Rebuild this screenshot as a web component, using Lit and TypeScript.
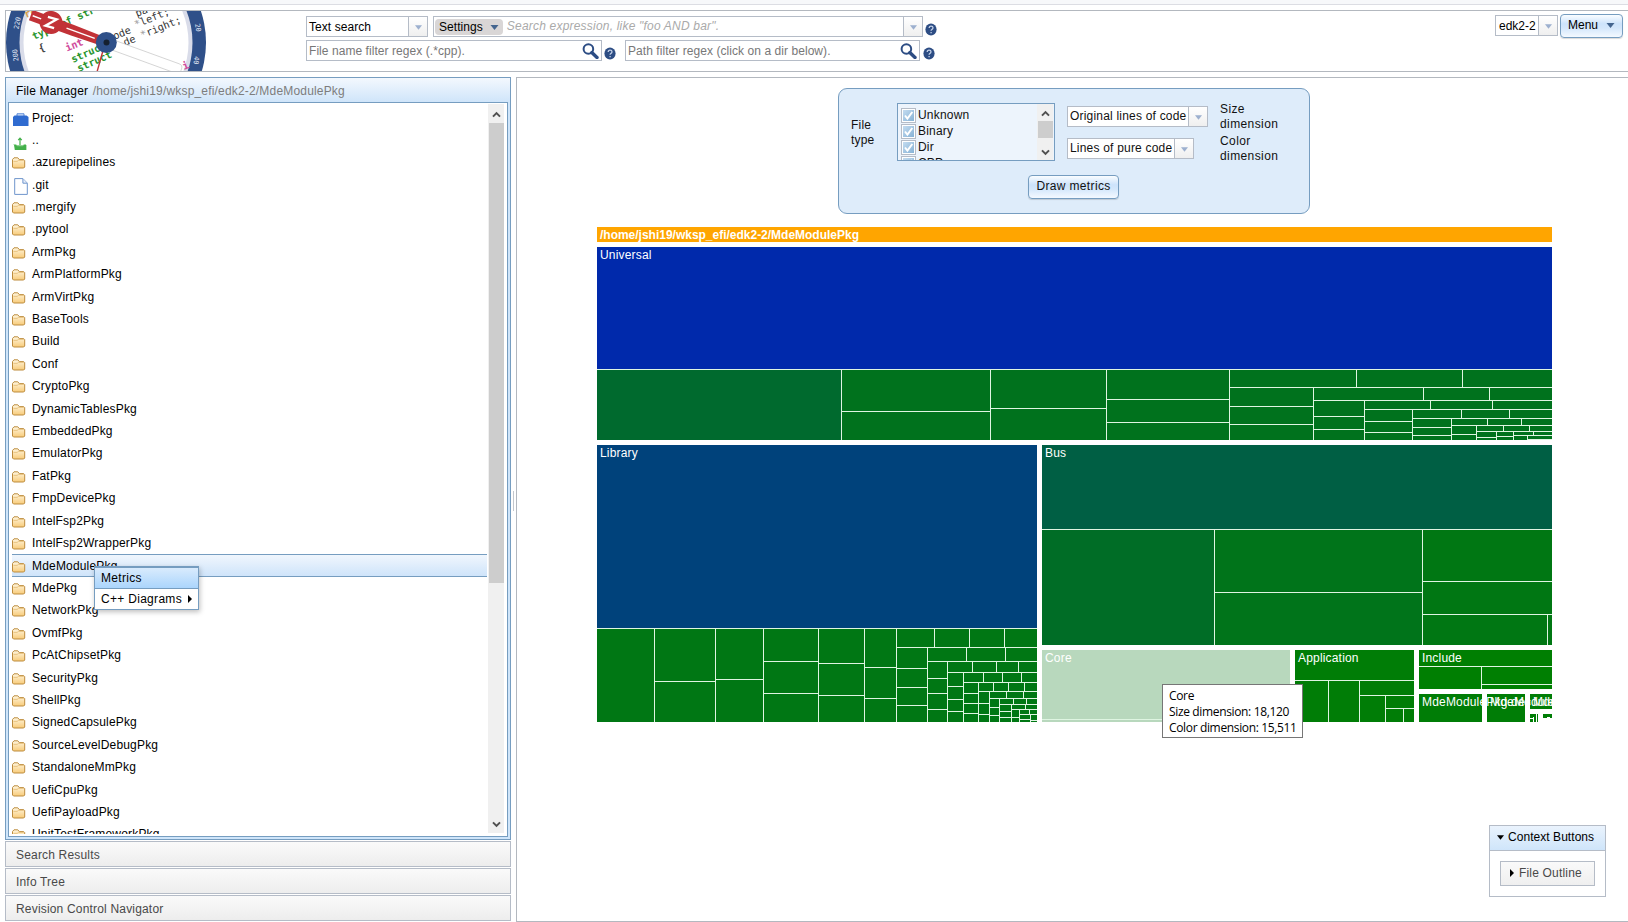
import { LitElement, html, svg, css } from "lit";
import { customElement } from "lit/decorators.js";

const FOLDERS = [
  ".azurepipelines", ".git", ".mergify", ".pytool", "ArmPkg", "ArmPlatformPkg", "ArmVirtPkg",
  "BaseTools", "Build", "Conf", "CryptoPkg", "DynamicTablesPkg", "EmbeddedPkg", "EmulatorPkg",
  "FatPkg", "FmpDevicePkg", "IntelFsp2Pkg", "IntelFsp2WrapperPkg", "MdeModulePkg", "MdePkg",
  "NetworkPkg", "OvmfPkg", "PcAtChipsetPkg", "SecurityPkg", "ShellPkg", "SignedCapsulePkg",
  "SourceLevelDebugPkg", "StandaloneMmPkg", "UefiCpuPkg", "UefiPayloadPkg", "UnitTestFrameworkPkg",
];

// Treemap areas: x, y, right, bottom, fill
const AREAS: [number, number, number, number, string][] = [
  [597, 227, 1552, 242, "#ffa500"],
  [597, 247, 1552, 369, "#0029ab"],
  [597, 369, 841, 440, "#006a2e"],
  [841, 369, 1552, 440, "#00721d"],
  [597, 445, 1037, 628, "#00427b"],
  [597, 628, 1037, 722, "#007714"],
  [1042, 445, 1552, 529, "#005f44"],
  [1042, 529, 1214, 645, "#006d26"],
  [1214, 529, 1422, 645, "#00741a"],
  [1422, 529, 1552, 645, "#007713"],
  [1042, 650, 1290, 722, "#b8d8bd"],
  [1295, 650, 1414, 722, "#007d06"],
  [1419, 650, 1552, 689, "#007f02"],
  [1419, 694, 1482, 722, "#007d06"],
  [1487, 694, 1525, 722, "#007d06"],
  [1530, 694, 1552, 709, "#007d06"],
  [1530, 714, 1538, 722, "#007d06"],
  [1543, 714, 1552, 718, "#007d06"],
];

// Horizontal separators: y, from, to
const H: [number, number, number][] = [
  [369, 597, 1552], [411, 841, 990], [408, 990, 1106], [399, 1106, 1229], [422, 1106, 1229],
  [387, 1229, 1552], [406, 1229, 1313], [424, 1229, 1313], [400, 1313, 1552], [416, 1313, 1364],
  [429, 1313, 1364], [409, 1364, 1552], [421, 1364, 1412], [432, 1364, 1412], [418, 1412, 1552],
  [427, 1412, 1451], [435, 1412, 1451], [425, 1451, 1552], [434, 1451, 1476], [431, 1476, 1552],
  [437, 1476, 1496], [436, 1496, 1513], [435, 1513, 1552], [439, 1527, 1552],
  [628, 597, 1037], [681, 654, 715], [679, 715, 763], [661, 763, 818], [693, 763, 818],
  [663, 818, 864], [695, 818, 864], [667, 864, 896], [698, 864, 896], [647, 896, 1037],
  [668, 896, 927], [687, 896, 927], [705, 896, 927], [661, 927, 1037], [678, 927, 947],
  [693, 927, 947], [709, 927, 947], [672, 947, 1037], [686, 947, 963], [699, 947, 963],
  [711, 947, 963], [682, 963, 1037], [693, 963, 978], [703, 963, 978], [713, 963, 978],
  [691, 978, 1037], [703, 978, 989], [714, 978, 989], [698, 989, 1037], [707, 989, 999],
  [715, 989, 999], [704, 999, 1037], [711, 999, 1011], [717, 999, 1011], [709, 1011, 1037],
  [717, 1011, 1019], [714, 1019, 1037], [719, 1019, 1030], [720, 1030, 1037],
  [529, 1042, 1552], [592, 1214, 1422], [581, 1422, 1552], [614, 1422, 1552],
  [719, 1042, 1290], [680, 1295, 1414], [695, 1359, 1414], [708, 1385, 1414],
  [666, 1419, 1552], [684, 1481, 1552],
];

// Vertical separators: x, from, to
const V: [number, number, number][] = [
  [841, 369, 440], [990, 369, 440], [1106, 369, 440], [1229, 369, 440], [1356, 369, 387],
  [1462, 369, 387], [1313, 387, 440], [1423, 387, 400], [1489, 387, 400], [1364, 400, 440],
  [1430, 400, 409], [1492, 400, 409], [1412, 409, 440], [1461, 409, 418], [1509, 409, 418],
  [1451, 418, 440], [1487, 418, 425], [1521, 418, 425], [1476, 425, 440], [1503, 425, 431],
  [1529, 425, 431], [1496, 431, 440], [1513, 431, 440], [1533, 431, 435], [1527, 435, 440],
  [654, 628, 722], [715, 628, 722], [763, 628, 722], [818, 628, 722], [864, 628, 722],
  [896, 628, 722], [934, 628, 647], [969, 628, 647], [1004, 628, 647], [927, 647, 722],
  [966, 647, 661], [1005, 647, 661], [947, 661, 722], [972, 661, 672], [996, 661, 672],
  [1018, 661, 672], [963, 672, 722], [983, 672, 682], [1002, 672, 682], [1021, 672, 682],
  [978, 682, 722], [993, 682, 691], [1008, 682, 691], [1024, 682, 691], [989, 691, 722],
  [1006, 691, 698], [1023, 691, 698], [999, 698, 722], [1013, 698, 704], [1026, 698, 704],
  [1011, 704, 722], [1025, 704, 709], [1019, 709, 722], [1029, 709, 714], [1030, 714, 722],
  [1214, 529, 645], [1422, 529, 645], [1547, 614, 645],
  [1328, 680, 722], [1359, 680, 722], [1385, 695, 722], [1403, 708, 722], [1481, 666, 689],
];

const LABELS: [number, number, string][] = [
  [600, 259, "Universal"], [600, 457, "Library"], [1045, 457, "Bus"], [1045, 662, "Core"],
  [1298, 662, "Application"], [1422, 662, "Include"], [1422, 706, "MdeModulePkg.dec"],
  [1490, 706, "MdeModulePkg.uni"], [1533, 706, "MdeModulePkg.dsc"],
];

const folderIcon = html`<svg class="ic" width="14" height="12" viewBox="0 0 14 12">
  <defs><linearGradient id="f" x1="0" y1="0" x2="0" y2="1"><stop offset="0" stop-color="#fff6df"/><stop offset="1" stop-color="#f8cb79"/></linearGradient></defs>
  <path d="M.5 10V2.5L2 .8h3.8L7.3 2.6h4.4l1 1V10l-1 1H1.5z" fill="url(#f)" stroke="#bd8c3e"/>
  <path d="M1.5 4.4h3.6l1.4-1h5.4" fill="none" stroke="#e3bb74" stroke-width=".8"/></svg>`;
const fileIcon = html`<svg class="ic file" width="14" height="17" viewBox="0 0 14 17">
  <path d="M.7.6h8.2l4.4 4.5v11.3H.7z" fill="#fff" stroke="#6f95cc"/><path d="M8.9.8v4.4h4.2" fill="#e8effa" stroke="#6f95cc"/></svg>`;
const projectIcon = html`<svg class="ic project" width="16" height="13" viewBox="0 0 16 13">
  <path d="M4 3V.8h7V3" fill="#dce9fb" stroke="#5585d6"/><path d="M0 4l1.5-1.6h12L15.5 4v9H0z" fill="#2f6bd0"/></svg>`;
const upIcon = html`<svg class="ic up" width="14" height="13" viewBox="0 0 14 13">
  <path d="M1 8h12.4v5H1.8z" fill="#43b04a"/><path d="M.5 7.5h2.6l1 1.2h5.8l1-1.2H13" fill="none" stroke="#a4dba6"/>
  <path d="M7 8V2M5.2 3.2L7 1.2l1.8 2" fill="none" stroke="#43b04a" stroke-width="1.2"/></svg>`;
const tri = (c: string, w = 8) => html`<svg width=${w} height="5" viewBox="0 0 8 5"><path d="M0 0h8L4 5z" fill=${c}/></svg>`;
const help = html`<svg class="help" width="12" height="13" viewBox="0 0 12 13"><ellipse cx="6" cy="6.5" rx="5.6" ry="6" fill="#2d4d84"/>
  <path d="M4.2 5q0-1.9 1.9-1.9T8 4.8q0 1-1 1.5t-.9 1.5M6.1 8.9v1.3" fill="none" stroke="#c3d0e8" stroke-width="1.3"/></svg>`;
const lens = html`<svg class="lens" width="17" height="16" viewBox="0 0 17 16"><circle cx="6.4" cy="6" r="4.8" fill="none" stroke="#2d4d84" stroke-width="2"/>
  <path d="M9.8 9.6l5.2 5" stroke="#2d4d84" stroke-width="3.4" stroke-linecap="round"/></svg>`;
const chev = (up: boolean) => html`<svg width="9" height="7" viewBox="0 0 9 7"><path d=${up ? "M1 5.6l3.5-3.5L8 5.6" : "M1 1.4l3.5 3.5L8 1.4"} fill="none" stroke="#505050" stroke-width="2"/></svg>`;

@customElement("app-root")
export class AppRoot extends LitElement {
  static styles = css`
    :host { display: block; width: 1628px; height: 922px; overflow: hidden; background: #fff; position: relative;
      font: 12px/16px "Liberation Sans", Arial, sans-serif; color: #000; letter-spacing: .18px; }
    * { box-sizing: border-box; }
    svg { display: block; flex: none; }
    .strip { height: 5px; background: #f7f8fa; border-bottom: 1px solid #dcdde3; }
    .top { margin: 5px 0 0 5px; height: 62px; border: 1px solid #b3b8bf; border-right: 0; display: flex; align-items: flex-start; }
    .logo { width: 201px; height: 60px; letter-spacing: 0; }
    .search { margin: 5px 0 0 99px; display: grid; gap: 3px; letter-spacing: .06px; }
    .line { display: flex; align-items: flex-start; height: 21px; }
    .box { height: 21px; border: 1px solid #b5bcc7; background: #fff; display: flex; align-items: center; white-space: nowrap; padding-left: 2px; }
    .box > span { flex: 1; }
    .arrow { align-self: stretch; width: 19px; border-left: 1px solid #b5bcc7; display: flex; align-items: center; justify-content: center;
      background: linear-gradient(#fff, #efefef); padding-top: 1px; flex: none; }
    .kind { width: 122px; }
    .expr { width: 490px; margin-left: 5px; padding-left: 1px; }
    .expr .hint { color: #aaa; font-style: italic; letter-spacing: .2px; margin-top: -2px; }
    .ghost { color: #777; }
    .settings { display: flex; align-items: center; gap: 7px; height: 16px; background: #d9d6d6; border-radius: 4px; padding: 1px 4px 0 4px; margin-right: 4px; flex: none; }
    .namef { width: 296px; padding-right: 2px; }
    .pathf { width: 295px; margin-left: 9px; padding-right: 2px; }
    .help { margin: 7px 0 0 2px; }
    .pathf + .help { margin-left: 3px; }
    .right { margin: 4px 5px 0 auto; display: flex; letter-spacing: 0; }
    .proj { width: 63px; margin-right: 2px; padding-left: 3px; }
    .btn { border: 1px solid #769dc0; border-radius: 4px; background: linear-gradient(#fafdff 0, #cde3fb 40%, #d4e7fb 60%, #f4f9ff 100%);
      box-shadow: 0 1px 1px rgba(0,0,0,.15); display: flex; align-items: center; justify-content: center; }
    .menu { width: 63px; height: 24px; gap: 8px; margin-top: -1px; padding-bottom: 2px; }
    .body { margin: 5px 0 0 5px; display: flex; height: 845px; }
    .left { width: 506px; display: flex; flex-direction: column; gap: 1px; }
    .fm { height: 763px; border: 1px solid #769dc0; background: #cfe5fa; padding: 0 2px 2px; display: flex; flex-direction: column; }
    .fmhead { height: 24px; margin: 0 -2px; padding: 5px 0 0 10px; background: linear-gradient(#f3f8fe, #cfe5fa); }
    .fmhead span { color: #7d7d7d; margin-left: 1px; }
    .fmbody { height: 735px; flex: 1; border: 1px solid #769dc0; background: #fff; display: flex; padding: 1px 3px 2px 3px; min-height: 0; }
    .list { width: 476px; overflow: hidden; padding: 1px 1px 0 0; }
    .row { height: 22.42px; display: flex; align-items: center; border: 1px solid transparent; border-width: 1px 0; white-space: nowrap; }
    .row.sel { border-color: #769dc0; background: linear-gradient(#f0f6fd, #cfe4fa); }
    .row.head { height: 23px; }
    .row.first { padding-top: 2px; }
    .ic { margin-right: 6px; margin-top: 2px; }
    .file { margin-left: 2px; margin-right: 4px; margin-top: 4px; }
    .project { margin: 4px 3px 0 1px; }
    .up { margin: 7px 5px 0 1px; }
    .sb { background: #f0f0f0; display: flex; flex-direction: column; align-items: center; width: 16px; }
    .sb.big { height: 729px; padding: 7px 0 5px; margin-top: 0; }
    .thumb { width: 15px; background: #cdcdcd; }
    .big .thumb { height: 460px; margin: 5px 0 auto; }
    .acc { height: 26px; border: 1px solid #b5bcc7; background: linear-gradient(#fafafa, #ededed); color: #494949; padding: 5px 10px; }
    .split { width: 5px; display: flex; align-items: center; justify-content: center; }
    .split i { width: 1px; height: 20px; background: #c3c7cd; margin-top: 3px; }
    .main { flex: 1; border: 1px solid #b3b8bf; border-right: 0; }
    .form { width: 472px; height: 126px; margin: 10px 0 0 321px; border: 1px solid #769dc0; border-radius: 9px; background: #deecfa; color: #111;
      padding: 14px 0 0 12px; letter-spacing: .2px; }
    .fields { display: flex; height: 72px; align-items: flex-start; line-height: 15px; }
    .ft { width: 46px; padding-top: 15px; }
    .multi { width: 158px; height: 58px; border: 1px solid #769dc0; background: #edf4fc; display: flex; justify-content: space-between; padding-right: 1px; }
    .opts { overflow: hidden; padding: 4px 0 0 3px; }
    .opt { height: 16px; display: flex; gap: 2px; line-height: 14px; white-space: nowrap; }
    .cb { width: 15px; height: 15px; flex: none; border: 1px solid #b5bcc7; background: #fff; padding: 1px; }
    .cb svg { background: linear-gradient(135deg, #c4dcf0, #86b2d6); }
    .small { padding: 6px 0 4px; }
    .small .thumb { height: 17px; margin: 4px 0 auto; }
    .sels { margin: 3px 0 0 12px; display: grid; gap: 11px; width: 141px; }
    .s1 { width: 141px; } .s2 { width: 127px; }
    .dims { margin-left: 12px; margin-top: -1px; width: 70px; line-height: 15px; letter-spacing: .4px; }
    .dims div { height: 32px; }
    .draw { width: 91px; height: 24px; margin: 0 0 0 177px; padding-bottom: 2px; letter-spacing: .35px; }
    .map { margin: 13px 0 0 80px; }
    .map text { fill: #fff; font-size: 12px; }
    .map .mt { font-weight: bold; letter-spacing: 0; }
    .code { font: 10.2px "DejaVu Sans Mono", monospace; }
    .code .b { font-weight: bold; }
    .deg { font: 6.8px "DejaVu Sans Mono", monospace; fill: #e3e9f5; }
    .pop { position: absolute; left: 94px; top: 566px; width: 105px; height: 44px; background: #fff; border: 1px solid #769dc0; border-top-width: 2px; box-shadow: 1px 2px 5px rgba(0,0,0,.25); letter-spacing: .3px; }
    .item { height: 20px; padding: 3px 6px; display: flex; align-items: center; gap: 6px; white-space: nowrap; }
    .item.on { height: 21px; border-bottom: 1px solid #769dc0; background: linear-gradient(#d9ebfd, #abd5fc); }
    .tip { position: absolute; left: 1162px; top: 684px; width: 141px; height: 54px; background: #fff; border: 1px solid #767676; padding: 3px 6px;
      font: 12px/16px "Open Sans", sans-serif; letter-spacing: -.35px; white-space: nowrap; }
    .ctx { position: absolute; left: 1489px; top: 825px; width: 117px; height: 72px; border: 1px solid #b5bcc7; background: #fff; letter-spacing: .05px; }
    .ch { height: 25px; border-bottom: 1px solid #b5bcc7; background: linear-gradient(#eaf3fd, #cfe5fa); display: flex; align-items: center; gap: 4px; padding: 0 0 2px 7px; white-space: nowrap; }
    .cbtn { margin: 10px; width: 95px; height: 25px; border: 1px solid #b5bcc7; background: linear-gradient(#fafafa, #efefef); color: #494949; display: flex; align-items: center; gap: 5px; padding: 0 0 2px 9px; letter-spacing: .18px; }
  `;

  private logo() {
    return html`<svg class="logo" viewBox="6 11 201 60">
      <circle cx="106" cy="42.5" r="100" fill="#2f5089"/>
      <circle cx="106" cy="42.5" r="86.5" fill="#d9dce9"/>
      <circle cx="106" cy="42.5" r="82.5" fill="#fff"/>
      <g class="code">
        <text class="b" transform="translate(26 18) rotate(-22)" fill="#d8a24c">ro</text>
        <text class="b" transform="translate(34 40) rotate(-24)" fill="#2a962f">typedef str</text>
        <text class="b" transform="translate(40 52) rotate(-20)" fill="#444">{</text>
        <text class="b" transform="translate(67 51.5) rotate(-22)" fill="#d04a9b">int</text>
        <text class="b" transform="translate(73 63) rotate(-24)" fill="#2a962f">struct</text>
        <text class="b" transform="translate(79 72) rotate(-24)" fill="#2a962f">struct</text>
        <text transform="translate(109 42) rotate(-22)" fill="#333">node</text>
        <text transform="translate(125 46) rotate(-22)" fill="#333">de</text>
        <text transform="translate(137 17) rotate(-22)" fill="#333">pa</text>
        <text transform="translate(136 28) rotate(-22)" fill="#333"><tspan fill="#999">*</tspan>left;</text>
        <text transform="translate(142 38.5) rotate(-22)" fill="#333"><tspan fill="#999">*</tspan>right;</text>
        <text class="b" transform="translate(184 70) rotate(-22)" fill="#d04a9b">i</text>
      </g>
      <path d="M104 47l-7 25" stroke="#c23237" stroke-width="1.4"/>
      <g transform="translate(106 42.5) rotate(20)">
        <rect x="0" y="-5" width="80" height="10" rx="4" fill="#fff" stroke="#c9c9c9" stroke-width=".7"/>
        <path d="M0 -4.5L-36 -5.5H-80V5.5H-36L0 4.5z" fill="#c23237"/>
        <circle cx="-58.5" cy="0" r="11.5" fill="#c23237"/>
        <path d="M-12 0H-42M-69 0H-78" stroke="#fff" stroke-width="1.5"/>
        <path d="M-54 4.5H-63L-54 -4.5H-63" transform="rotate(-4 -58 0)" fill="none" stroke="#fff" stroke-width="2.4"/>
      </g>
      <circle cx="106.3" cy="42.5" r="10.5" fill="#2f5089"/><circle cx="106.5" cy="42.5" r="3" fill="#15202f"/>
      <g class="deg">
        <text transform="translate(18.5 29.5) rotate(-80)">220</text>
        <text transform="translate(18.5 61) rotate(-97)">200</text>
        <text transform="translate(195 24) rotate(80)">20</text>
        <text transform="translate(194.5 56) rotate(97)">40</text>
      </g>
    </svg>`;
  }

  private treemap() {
    return html`<svg class="map" width="955" height="495" viewBox="597 227 955 495">
      ${AREAS.map(([x, y, r, b, f]) => svg`<rect x=${x} y=${y} width=${r - x} height=${b - y} fill=${f}/>`)}
      <g fill="#dff5e2">
        ${H.map(([y, a, b]) => svg`<rect x=${a} y=${y} width=${b - a} height="1"/>`)}
        ${V.map(([x, a, b]) => svg`<rect x=${x} y=${a} width="1" height=${b - a}/>`)}
      </g>
      <text class="mt" x="600" y="239" textLength="259">/home/jshi19/wksp_efi/edk2-2/MdeModulePkg</text>
      ${LABELS.map(([x, y, t]) => svg`<text x=${x} y=${y}>${t}</text>`)}
      <path d="M1530 718.5h3M1533.5 717v5M1536.5 714v8M1547 717.5h3" stroke="#fff" stroke-width="1"/>
    </svg>`;
  }

  private opt(t: string) {
    return html`<div class="opt"><div class="cb"><svg width="11" height="11" viewBox="0 0 11 11"><path d="M2 5.5l2.4 3L9.3 2" fill="none" stroke="#fff" stroke-width="2"/></svg></div>${t}</div>`;
  }

  render() {
    return html`
      <div class="strip"></div>
      <div class="top">
        ${this.logo()}
        <div class="search">
          <div class="line">
            <div class="box kind"><span>Text search</span><div class="arrow">${tri("#9db0cf", 7)}</div></div>
            <div class="box expr"><div class="settings">Settings ${tri("#44658f", 9)}</div><span class="hint">Search expression, like "foo AND bar".</span><div class="arrow">${tri("#9db0cf", 7)}</div></div>
            ${help}
          </div>
          <div class="line">
            <div class="box namef"><span class="ghost">File name filter regex (.*cpp).</span>${lens}</div>${help}
            <div class="box pathf"><span class="ghost">Path filter regex (click on a dir below).</span>${lens}</div>${help}
          </div>
        </div>
        <div class="right">
          <div class="box proj"><span>edk2-2</span><div class="arrow">${tri("#9db0cf", 7)}</div></div>
          <div class="btn menu">Menu ${tri("#44658f", 9)}</div>
        </div>
      </div>
      <div class="body">
        <div class="left">
          <div class="fm">
            <div class="fmhead">File Manager <span>/home/jshi19/wksp_efi/edk2-2/MdeModulePkg</span></div>
            <div class="fmbody">
              <div class="list">
                <div class="row head first">${projectIcon}Project:</div>
                <div class="row head">${upIcon}..</div>
                ${FOLDERS.map((f) => html`<div class="row ${f === "MdeModulePkg" ? "sel" : ""}">${f === ".git" ? fileIcon : folderIcon}${f}</div>`)}
              </div>
              <div class="sb big">${chev(true)}<div class="thumb"></div>${chev(false)}</div>
            </div>
          </div>
          <div class="acc">Search Results</div>
          <div class="acc">Info Tree</div>
          <div class="acc">Revision Control Navigator</div>
        </div>
        <div class="split"><i></i></div>
        <div class="main">
          <div class="form">
            <div class="fields">
              <div class="ft">File<br>type</div>
              <div class="multi">
                <div class="opts">${["Unknown", "Binary", "Dir", "CPP"].map((t) => this.opt(t))}</div>
                <div class="sb small">${chev(true)}<div class="thumb"></div>${chev(false)}</div>
              </div>
              <div class="sels">
                <div class="box s1"><span>Original lines of code</span><div class="arrow">${tri("#9db0cf", 7)}</div></div>
                <div class="box s2"><span>Lines of pure code</span><div class="arrow">${tri("#9db0cf", 7)}</div></div>
              </div>
              <div class="dims"><div>Size<br>dimension</div><div>Color<br>dimension</div></div>
            </div>
            <div class="btn draw">Draw metrics</div>
          </div>
          ${this.treemap()}
        </div>
      </div>
      <div class="pop">
        <div class="item on">Metrics</div>
        <div class="item">C++ Diagrams <svg width="4" height="8" viewBox="0 0 4 8"><path d="M0 0v8l4-4z"/></svg></div>
      </div>
      <div class="tip">Core<br>Size dimension: 18,120<br>Color dimension: 15,511</div>
      <div class="ctx">
        <div class="ch">${tri("#000", 7)}Context Buttons</div>
        <div class="cbtn"><svg width="4" height="8" viewBox="0 0 4 8"><path d="M0 0v8l4-4z"/></svg>File Outline</div>
      </div>`;
  }
}
